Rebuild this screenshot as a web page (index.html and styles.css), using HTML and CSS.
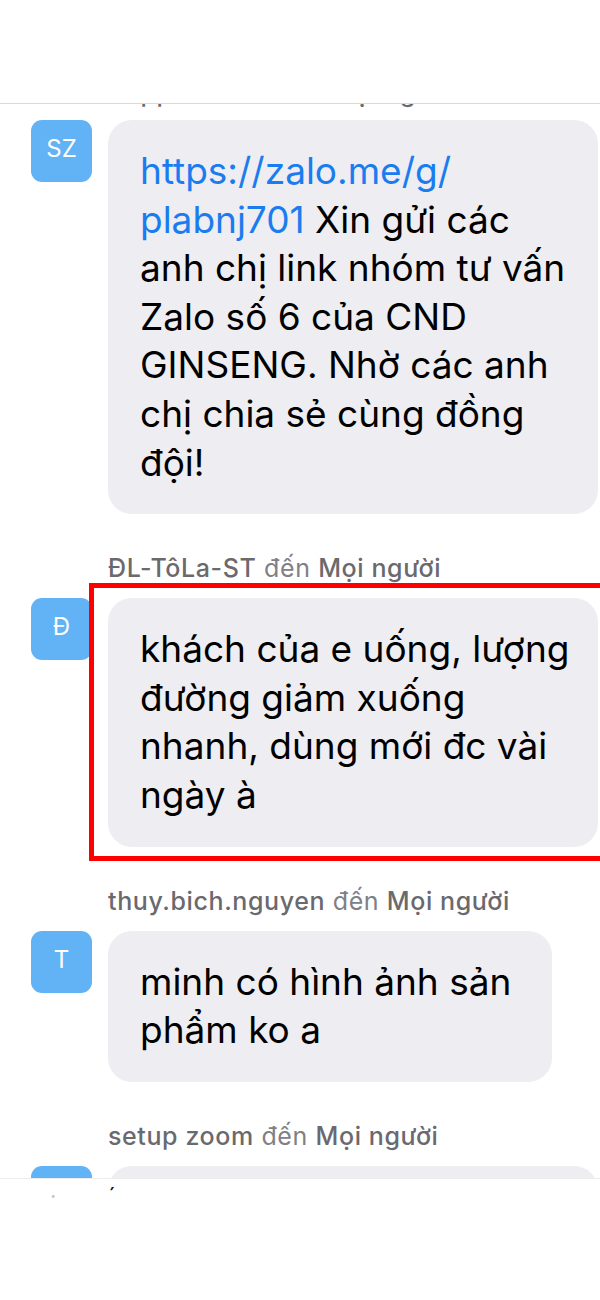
FILE: index.html
```html
<!DOCTYPE html>
<html lang="vi">

<head>
    <meta charset="utf-8">
    <title>Nhóm tư vấn</title>
    <!--Stylesheet-->
    <link rel="stylesheet" href="styles.css">
</head>

<body>
    <div class="top"></div>

    <div class="chat">
        <div class="msg">
            <p class="sender cut"><b>Support Zalo</b> đến <b>Mọi người</b></p>
            <div class="row">
                <div class="avatar">SZ</div>
                <div class="bubble">
                    <a href="#">https://zalo.me/g/<br>plabnj701</a> Xin gửi các<br>
                    anh chị link nhóm tư vấn<br>
                    Zalo số 6 của CND<br>
                    GINSENG. Nhờ các anh<br>
                    chị chia sẻ cùng đồng<br>
                    đội!
                </div>
            </div>
        </div>

        <div class="msg">
            <p class="sender"><b>ĐL-TôLa-ST</b> đến <b>Mọi người</b></p>
            <div class="row">
                <div class="avatar">Đ</div>
                <div class="bubble">
                    khách của e uống, lượng<br>
                    đường giảm xuống<br>
                    nhanh, dùng mới đc vài<br>
                    ngày à
                </div>
                <div class="mark"></div>
            </div>
        </div>

        <div class="msg">
            <p class="sender"><b>thuy.bich.nguyen</b> đến <b>Mọi người</b></p>
            <div class="row">
                <div class="avatar">T</div>
                <div class="bubble">
                    minh có hình ảnh sản<br>
                    phẩm ko a
                </div>
            </div>
        </div>

        <div class="msg">
            <p class="sender"><b>setup zoom</b> đến <b>Mọi người</b></p>
            <div class="row">
                <div class="avatar">S</div>
                <div class="bubble">
                    mọi người vào link zoom nhé
                </div>
            </div>
        </div>
    </div>

    <div class="bottom">
        <span class="dot">·</span>
        <span class="tick">ˊ</span>
    </div>
</body>

</html>
```

FILE: styles.css
```css
*,
*:before,
*:after {
    padding: 0;
    margin: 0;
    box-sizing: border-box;
}

body {
    width: 600px;
    height: 1300px;
    background: #ffffff;
    font-family: Inter, 'Liberation Sans', sans-serif;
    color: #000000;
    overflow: hidden;
}

.top {
    height: 104px;
    border-bottom: 1px solid #dadada;
}

.chat {
    height: 1074px;
    overflow: hidden;
    padding-left: 31px;
}

.msg {
    margin-top: 40px;
}

.sender {
    margin-left: 77px;
    margin-bottom: 16px;
    font-size: 25px;
    line-height: 28px;
    letter-spacing: 0.6px;
    color: #808085;
    white-space: nowrap;
}

.sender b {
    font-weight: 500;
    color: #69696e;
}

.sender.cut {
    margin-top: -65px;
    margin-bottom: 13px;
}

.row {
    position: relative;
    display: flex;
    align-items: flex-start;
    gap: 16px;
}

.avatar {
    flex: none;
    width: 61px;
    height: 62px;
    border-radius: 11px;
    background-color: #62b3f6;
    color: #ffffff;
    font-size: 24px;
    line-height: 58px;
    text-align: center;
}

.bubble {
    max-width: 490px;
    padding: 27px 41px 27px 32px;
    border-radius: 24px;
    background-color: #ededf2;
    font-size: 37px;
    line-height: 48.6px;
    white-space: nowrap;
    overflow: hidden;
}

.bubble a {
    color: #1b7cf0;
    text-decoration: none;
}

/* red highlight drawn over the second message */
.mark {
    position: absolute;
    left: 58px;
    top: -15px;
    right: -10px;
    bottom: -14px;
    border: 5px solid #ff0000;
}

.bottom {
    height: 122px;
    border-top: 1px solid #ececec;
    display: flex;
    align-items: flex-start;
    gap: 52px;
    padding: 4px 0 0 50px;
    font-size: 22px;
}

.dot {
    color: #c8c8c8;
}

.tick {
    color: #111111;
}
```
